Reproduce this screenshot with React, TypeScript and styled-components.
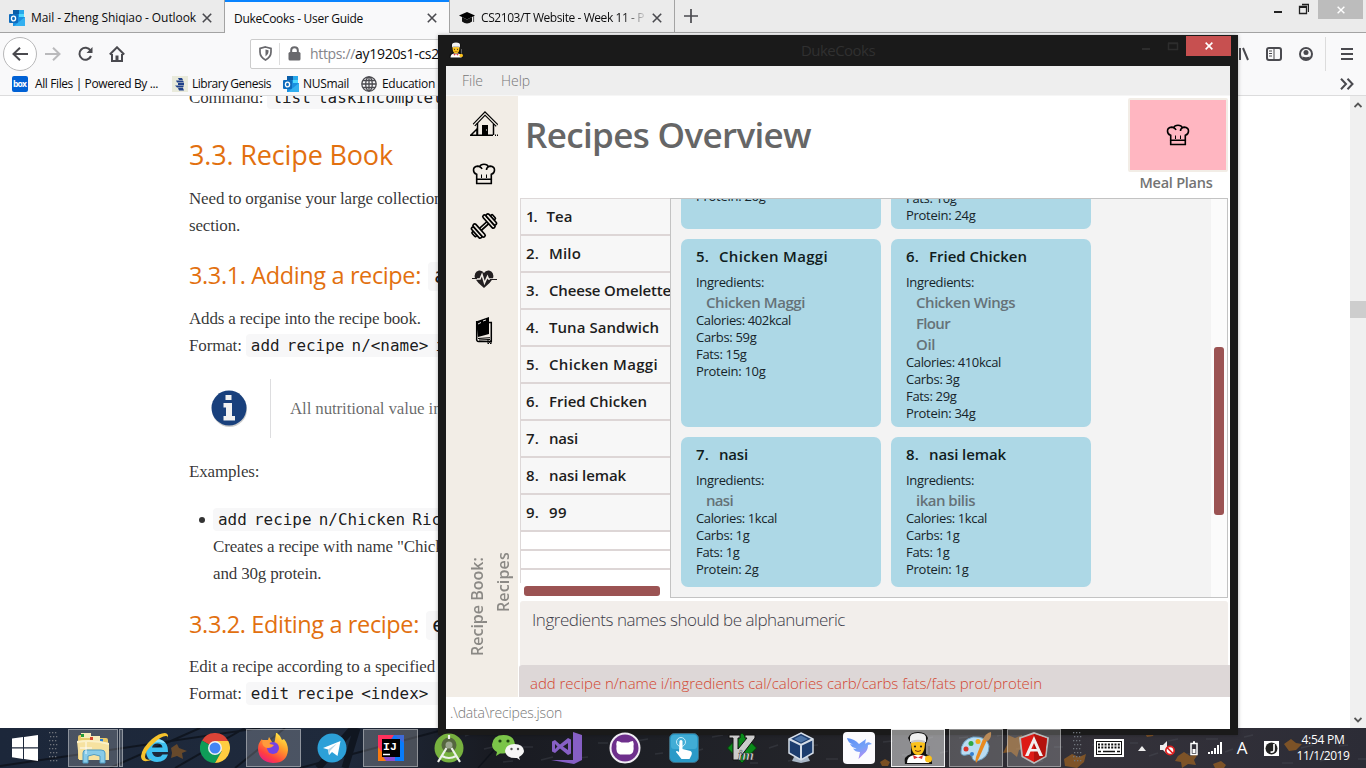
import React, { useLayoutEffect, useRef } from "react";
import styled, { createGlobalStyle, css } from "styled-components";

const UI = `"Open Sans", "Noto Sans", sans-serif`;

const GlobalStyle = createGlobalStyle`
  * { box-sizing: border-box; }
  body { margin: 0; overflow: hidden; background: #fff; font-family: ${UI}; }
  svg { display: block; flex: none; }
`;

/* ---------- text that keeps a known advance width ---------- */

const FitSpan = styled.span`
  display: inline-block;
  white-space: pre;
  flex: none;
`;

function Fit({ w, children, vertical }: { w: number; children: string; vertical?: boolean }) {
  const ref = useRef<HTMLSpanElement>(null);
  useLayoutEffect(() => {
    const el = ref.current;
    if (!el) return;
    el.style.letterSpacing = "0px";
    const natural = vertical ? el.offsetHeight : el.getBoundingClientRect().width;
    el.style.letterSpacing = `${(w - natural) / children.length}px`;
  }, [w, children, vertical]);
  return <FitSpan ref={ref}>{children}</FitSpan>;
}

/* ---------- desktop ---------- */

const Desktop = styled.div`
  position: relative;
  width: 1366px;
  height: 768px;
  overflow: hidden;
  display: grid;
  grid-template-rows: 728px 40px;
`;

/* ---------- browser ---------- */

const Browser = styled.div`
  display: flex;
  flex-direction: column;
  background: #fff;
  overflow: hidden;
`;

const TabStrip = styled.div`
  display: flex;
  height: 33px;
  flex: none;
  background: #ebebeb;
  border-bottom: 1px solid #a3a3a3;
`;

const Tab = styled.div<{ $active?: boolean }>`
  display: flex;
  align-items: center;
  width: 225px;
  height: ${(p) => (p.$active ? 33 : 32)}px;
  padding: 3px 12px 0 9px;
  border-right: 1px solid #a3a3a3;
  font-size: 12px;
  color: #0c0c0d;
  background: ${(p) => (p.$active ? "#f9f9fa" : "#ebebeb")};
  ${(p) => p.$active && css`box-shadow: inset 0 2px 0 #0a84ff;`}
`;

const TabTitle = styled.span<{ $gap?: number }>`
  margin-left: ${(p) => p.$gap ?? 6}px;
  flex: 1;
  overflow: hidden;
  white-space: pre;
`;

const FadeTitle = styled(TabTitle)`
  margin-right: 6px;
  mask-image: linear-gradient(90deg, #000 142px, transparent 167px);
`;

const NewTab = styled.div`
  display: flex;
  padding: 9px 9px;
`;

const WindowButtons = styled.div`
  display: flex;
  margin-left: auto;
  align-items: flex-start;
  padding-right: 3px;
`;

const CloseGray = styled.div`
  display: grid;
  place-items: center;
  width: 45px;
  height: 19px;
  margin-left: 9px;
  background: #bcbcbc;
`;

const NavBar = styled.div`
  display: flex;
  align-items: center;
  height: 39px;
  flex: none;
  padding: 2px 13px 0 3px;
  background: #f9f9fa;
`;

const BackButton = styled.div`
  display: grid;
  place-items: center;
  width: 34px;
  height: 34px;
  border: 1px solid #b8b8b9;
  border-radius: 50%;
  background: #fff;
  margin-right: 8px;
`;

const NavIcon = styled.div<{ $w: number }>`
  display: flex;
  width: ${(p) => p.$w}px;
`;

const UrlBar = styled.div`
  display: flex;
  align-items: center;
  width: 957px;
  height: 30px;
  margin-left: 117px;
  padding-left: 8px;
  border: 1px solid #ccc;
  border-radius: 2px;
  background: #fff;
  font-size: 14px;
  color: #0c0c0d;
`;

const UrlDivider = styled.div`
  width: 1px;
  height: 22px;
  margin: 0 8px 0 7px;
  background: #ddd;
`;

const Scheme = styled.span`
  margin-left: 9px;
  color: #85858a;
`;

const NavRight = styled.div`
  display: flex;
  align-items: center;
  margin-left: auto;
`;

const NavGap = styled.div`
  width: 17px;
`;

const MenuDivider = styled.div`
  width: 1px;
  height: 34px;
  margin: 0 15px 0 12px;
  background: #dcdcdc;
`;

const Bookmarks = styled.div`
  display: flex;
  align-items: center;
  height: 24px;
  flex: none;
  padding: 0 12px;
  background: #f9f9fa;
  border-bottom: 1px solid #dcdcdd;
  font-size: 12px;
  color: #0c0c0d;
`;

const Bookmark = styled.div<{ $gap: number; $inner: number }>`
  display: flex;
  align-items: center;
  gap: ${(p) => p.$inner}px;
  margin-right: ${(p) => p.$gap}px;
`;

const Overflow = styled.div`
  margin-left: auto;
`;

const PageArea = styled.div`
  display: flex;
  flex: 1;
  min-height: 0;
`;

const Article = styled.div`
  flex: 1;
  min-width: 0;
  overflow: hidden;
  padding-left: 189px;
  font-family: "Liberation Serif", serif;
  font-size: 17px;
  letter-spacing: -0.16px;
  line-height: 27px;
  color: rgba(0, 0, 0, 0.8);
  white-space: pre;
`;

const Para = styled.div<{ $top: number; $indent?: number }>`
  margin-top: ${(p) => p.$top}px;
  padding-left: ${(p) => p.$indent ?? 0}px;
`;

const Line = styled.div`
  display: flex;
  height: 27px;
  align-items: center;
`;

const Heading = styled.div<{ $top: number; $size: number; $h: number }>`
  display: flex;
  align-items: center;
  height: ${(p) => p.$h}px;
  margin-top: ${(p) => p.$top}px;
  font-family: ${UI};
  font-size: ${(p) => p.$size}px;
  line-height: 1;
  color: #e2700f;
`;

const Code = styled.code<{ $big?: boolean }>`
  display: inline-block;
  height: ${(p) => (p.$big ? 29 : 23)}px;
  line-height: ${(p) => (p.$big ? 28 : 24)}px;
  margin-left: ${(p) => (p.$big ? 7 : 0)}px;
  padding: 0 ${(p) => (p.$big ? 6 : 5)}px;
  border-radius: 4px;
  background: #f7f7f8;
  font-family: "DejaVu Sans Mono", monospace;
  font-size: ${(p) => (p.$big ? 22 : 15.94)}px;
  letter-spacing: 0;
  word-spacing: -0.15em;
  color: rgba(0, 0, 0, 0.9);
`;

const Note = styled.div`
  display: flex;
  align-items: center;
  height: 59px;
  margin-top: 20px;
  padding-left: 22px;
  color: rgba(0, 0, 0, 0.6);
`;

const NoteText = styled.div`
  display: flex;
  align-items: center;
  height: 59px;
  margin-left: 21px;
  padding-left: 19px;
  border-left: 1px solid #dddddf;
`;

const Bullet = styled.span`
  width: 6px;
  height: 6px;
  margin: 1px 8px 0 -14px;
  border-radius: 50%;
  background: #333;
`;

const PageScroll = styled.div`
  display: flex;
  flex-direction: column;
  align-items: center;
  justify-content: space-between;
  width: 16px;
  padding: 6px 0 5px;
  background: #f0f0f0;
`;

const PageThumb = styled.div`
  width: 16px;
  height: 17px;
  margin: 0 0 206px;
  background: #cdcdcd;
`;

/* ---------- DukeCooks window ---------- */

const AppWindow = styled.div`
  position: absolute;
  left: 438px;
  top: 35px;
  width: 800px;
  height: 700px;
  display: flex;
  flex-direction: column;
  padding: 0 8px 8px;
  background: #1a1a1a;
  box-shadow: 0 0 4px rgba(0, 0, 0, 0.3);
`;

const TitleBar = styled.div`
  display: grid;
  grid-template-columns: 1fr auto 1fr;
  height: 31px;
  flex: none;
  font-size: 15px;
  line-height: 31px;
  color: #303030;
`;

const TitleIcon = styled.div`
  padding: 7px 0 0 2px;
`;

const TitleButtons = styled.div`
  display: flex;
  justify-content: flex-end;
  align-items: flex-start;
`;

const CloseRed = styled.div`
  display: grid;
  place-items: center;
  width: 45px;
  height: 20px;
  margin: 1px -1px 0 4px;
  background: #c75050;
`;

const MenuBar = styled.div`
  display: flex;
  gap: 18px;
  height: 30px;
  flex: none;
  padding-left: 16px;
  background: #eeeeee;
  border-bottom: 1px solid #f6f6f6;
  font-size: 14px;
  font-weight: 300;
  line-height: 29px;
  color: #777;
`;

const Body = styled.div`
  display: flex;
  height: 601px;
  flex: none;
  background: #fff;
`;

const Sidebar = styled.div`
  display: flex;
  flex-direction: column;
  width: 72px;
  padding: 15px 0 41px 24px;
  background: #f2ede6;
`;

const SideIcon = styled.div<{ $gap?: number }>`
  width: 28px;
  height: 28px;
  margin-bottom: ${(p) => p.$gap ?? 24}px;
`;

const SideLabel = styled.div`
  display: flex;
  flex-direction: column;
  margin: auto 0 0 -6px;
  writing-mode: vertical-rl;
  transform: rotate(180deg);
  width: 52px;
  height: 104px;
  font-size: 16px;
  font-weight: 600;
  line-height: 26px;
  color: #8b8985;
  align-self: flex-start;
`;

const SecondLine = styled.div`
  padding-top: 44px;
`;

const Main = styled.div`
  display: flex;
  flex-direction: column;
  flex: 1;
  padding-left: 1px;
`;

const Header = styled.div`
  display: flex;
  justify-content: space-between;
  height: 102px;
  flex: none;
  padding: 2px 2px 0 6px;
`;

const PageTitle = styled.div`
  margin-top: 17px;
  font-size: 35px;
  font-weight: 600;
  line-height: 40px;
  color: #666;
`;

const PlanTile = styled.div`
  display: flex;
  flex-direction: column;
  align-items: center;
  width: 100px;
  font-size: 14.5px;
  font-weight: 600;
  line-height: 21px;
  color: #737373;
`;

const PlanCaption = styled.div`
  padding-right: 4px;
`;

const PlanButton = styled.div`
  display: grid;
  place-items: center;
  width: 100px;
  height: 74px;
  flex: none;
  border: 2px solid #f2ede6;
  border-radius: 2px;
  background: #ffb6c1;
`;

const Split = styled.div`
  display: flex;
  height: 400px;
  flex: none;
  padding: 0 2px 0 1px;
`;

const List = styled.div`
  width: 150px;
  overflow: hidden;
  border-top: 1px solid #ddd8d8;
`;

const ListViewport = styled.div`
  height: 384px;
  overflow: hidden;
`;

const ListRow = styled.div<{ $empty?: boolean }>`
  display: flex;
  gap: 10px;
  height: ${(p) => (p.$empty ? 19 : 37)}px;
  padding-left: 5px;
  border-left: 1px solid #ddd8d8;
  border-bottom: 2px solid #ddd6d6;
  background: ${(p) => (p.$empty ? "#fff" : "#f7f7f7")};
  font-size: 15px;
  font-weight: 600;
  line-height: 35px;
  color: #1d1d1d;
`;

const HThumb = styled.div`
  width: 136px;
  height: 10px;
  margin: 3px 0 0 4px;
  border-radius: 3px;
  background: #9b5353;
`;

const CardsPane = styled.div`
  display: flex;
  flex: 1;
  border: 1px solid #c3c3c3;
  background: #f3f3f3;
`;

const CardsGrid = styled.div`
  display: grid;
  grid-template-columns: 200px 200px;
  grid-template-rows: 30px 188px 150px;
  gap: 10px;
  flex: 1;
  padding-left: 10px;
  overflow: hidden;
`;

const Card = styled.div<{ $cut?: number }>`
  display: flex;
  flex-direction: column;
  justify-content: ${(p) => (p.$cut ? "flex-end" : "flex-start")};
  padding: ${(p) => (p.$cut ? `0 15px ${p.$cut}px` : "6px 15px 0")};
  border-radius: ${(p) => (p.$cut ? "0 0 7px 7px" : "7px")};
  background: #add8e6;
  overflow: hidden;
  font-size: 13px;
  line-height: 17px;
  color: #16242a;
`;

const CardTitle = styled.div`
  display: flex;
  gap: 10px;
  height: 28.5px;
  flex: none;
  font-size: 15px;
  font-weight: 600;
  line-height: 23px;
  color: #101c20;
`;

const CardLine = styled.div`
  height: 17px;
  flex: none;
`;

const Ingredient = styled.div`
  height: 21px;
  flex: none;
  padding-left: 10px;
  font-size: 15px;
  font-weight: 600;
  line-height: 22px;
  color: #657278;
`;

const CardsScroll = styled.div`
  width: 16px;
  padding: 148px 0 0 3px;
  background: #fbfbfb;
`;

const VThumb = styled.div`
  width: 10px;
  height: 168px;
  border-radius: 3px;
  background: #9b5353;
`;

const Result = styled.div`
  height: 64px;
  flex: none;
  margin: 3px 2px 0 1px;
  padding-left: 12px;
  border-radius: 3px 3px 0 0;
  background: #f2eeeb;
  font-size: 17px;
  font-weight: 300;
  line-height: 38px;
  color: #3c3c48;
`;

const Command = styled.div`
  height: 32px;
  flex: none;
  padding-left: 11px;
  border-radius: 3px 0 0 0;
  background: #ddd7d7;
  font-size: 15px;
  font-weight: 300;
  line-height: 37px;
  color: #d2452f;
`;

const Status = styled.div`
  flex: 1;
  padding-left: 4px;
  background: #fff;
  font-size: 14px;
  font-weight: 300;
  line-height: 32px;
  color: #777;
`;

/* ---------- taskbar ---------- */

const Wallpaper = styled.div`
  height: 40px;
  background: linear-gradient(90deg, #1c273a 0, #1f2a3c 25%, #191b22 36%, #1f2127 50%, #26262b 65%, #34323a 80%, #2c2c36 100%);
`;

const Taskbar = styled.div`
  position: absolute;
  left: 0;
  bottom: 0;
  display: flex;
  align-items: center;
  width: 1366px;
  height: 40px;
`;

const Slot = styled.div<{ $w: number; $open?: boolean; $front?: boolean }>`
  display: grid;
  place-items: center;
  width: ${(p) => p.$w}px;
  height: 38px;
  ${(p) =>
    p.$open &&
    css`
      width: ${p.$w - 4}px;
      margin: 0 2px;
      background: ${p.$front ? "rgba(255,255,255,.48)" : "rgba(255,255,255,.2)"};
      border: 1px solid ${p.$front ? "rgba(255,255,255,.85)" : "rgba(255,255,255,.38)"};
    `}
`;

const Sliver = styled.div`
  width: 4px;
  height: 38px;
  margin: 0 4px 0 -1px;
  border: 1px solid rgba(255, 255, 255, 0.38);
  background: rgba(255, 255, 255, 0.2);
`;

const Clock = styled.div`
  display: flex;
  flex-direction: column;
  align-items: center;
  width: 86px;
  margin-left: auto;
  font-size: 12px;
  line-height: 16px;
  color: #fff;
`;

const TrayIcon = styled.div<{ $left: number }>`
  margin-left: ${(p) => p.$left}px;
  color: #fff;
  font-size: 17px;
  line-height: 20px;
`;

/* ---------- icons ---------- */

const OutlookIcon = () => (
  <svg width="16" height="16" viewBox="0 0 16 16">
    <path d="M4 0h11v8H4z" fill="#1490df" />
    <path d="M4 0h6v4H4z" fill="#0a5ea8" />
    <path d="M10 0h5v4h-5z" fill="#28a8ea" />
    <path d="M10 4h5v4h-5z" fill="#50d9ff" />
    <path d="M4 7h12v9H4z" fill="#1a8fe0" />
    <path d="M16 7v9H5z" fill="#33b0f0" />
    <rect y="4" width="9" height="9" rx="1" fill="#0f6cbd" />
    <ellipse cx="4.5" cy="8.5" rx="2.1" ry="2.4" fill="none" stroke="#fff" strokeWidth="1.3" />
  </svg>
);

const Cross = ({ s = 10, c = "#4a4a4f", w = 1.6 }) => (
  <svg width={s} height={s} viewBox="0 0 10 10">
    <path d="M.8.8l8.4 8.4M9.2.8L.8 9.2" stroke={c} strokeWidth={w} />
  </svg>
);

const CapIcon = () => (
  <svg width="16" height="14" viewBox="0 0 16 14">
    <path d="M8 1l8 3.6-8 3.8L0 4.600z" fill="#000" />
    <path d="M3 6v4.500Q8 14.500 13 10.500V6L8 8.400z" fill="#111" />
    <path d="M14.600 5v6" stroke="#555" />
  </svg>
);

const GlobeIcon = () => (
  <svg width="16" height="16" viewBox="0 0 16 16" fill="none" stroke="#4a4a4f" strokeWidth="1.3">
    <circle cx="8" cy="8" r="7.200" />
    <ellipse cx="8" cy="8" rx="3.300" ry="7.200" />
    <path d="M8 1v14M1 8h14M2 4.500h12M2 11.500h12" />
  </svg>
);

const ChefHat = () => (
  <svg width="28" height="28" viewBox="0 0 28 28">
    <g fill="none" stroke="#000" strokeWidth="1.6">
      <path d="M6.700 19.500v-5.200Q3.500 13.500 3.500 10q0-3.500 4.200-3.900 1.300.1 2 .6Q10.500 4.300 14 4.300t4.300 2.400q.8-.5 2-.6Q24.500 6.500 24.500 10q0 3.500-3.200 4.300v5.200M9.500 7Q11.500 7.300 12 9M18.500 7Q16.500 7.300 16.500 10" />
      <path d="M6 19.300h16M6 23.500h16M6.700 19v5M21.300 19v5" />
    </g>
    <path d="M11.500 14.500v3.500M16.500 14.500v3.500" stroke="#000" />
  </svg>
);

const HouseIcon = () => (
  <svg width="28" height="28" viewBox="0 0 28 28">
    <path d="M4 14L15 2.500l12 12" fill="none" stroke="#000" strokeWidth="3.500" />
    <path d="M4 14L15 2.500l12 12" fill="none" stroke="#f2ede6" strokeWidth="1.200" />
    <path d="M7.500 12v12M23.500 13v11" stroke="#000" strokeWidth="1.500" />
    <path d="M12 14h6v10h-6z" fill="#000" />
    <path d="M0 24.300h23M1 24l6-6v6M25 24.300h1M27 24.300h1" fill="none" stroke="#000" strokeWidth="1.500" />
    <path d="M16 19h1" stroke="#fff" />
  </svg>
);

const DumbbellIcon = () => (
  <svg width="28" height="28" viewBox="0 0 28 28">
    <g transform="translate(14 14) rotate(-42) scale(.92) translate(-14 -14)" fill="#f2ede6" stroke="#000" strokeWidth="1.800">
      <rect x="8" y="12.600" width="12" height="3" />
      <rect x="-1" y="10.500" width="3" height="6" rx="1" />
      <rect x="26" y="10.500" width="3" height="6" rx="1" />
      <rect x="1.500" y="6.500" width="3.600" height="15" rx="1.800" />
      <rect x="5" y="5" width="3.600" height="18" rx="1.800" />
      <rect x="19.400" y="5" width="3.600" height="18" rx="1.800" />
      <rect x="22.900" y="6.500" width="3.600" height="15" rx="1.800" />
    </g>
  </svg>
);

const HeartIcon = () => (
  <svg width="28" height="28" viewBox="0 0 28 28">
    <path d="M14 24Q8 19.500 5 14.500 3.500 8 9 6.500q3.500-.3 5 2.500 1.500-2.800 5-2.500 5.500 1.500 4 8Q20 19.500 14 24z" fill="#231f20" />
    <path d="M2 15h8l2-4.500 2.500 8.500 3-6.500 1 2.500H27" fill="none" stroke="#f2ede6" strokeWidth="1.500" />
    <path d="M2 14.500h5M20 15.500h7" stroke="#231f20" strokeWidth="1.200" />
  </svg>
);

const BookIcon = () => (
  <svg width="28" height="28" viewBox="0 0 28 28">
    <path d="M6 5.500L19 1v17L8 21z" fill="#000" />
    <path d="M6.700 5v17q-.5 3.500 2 3.500h12.600V6.500H18" fill="none" stroke="#000" strokeWidth="1.500" />
    <path d="M8 22.500l12-.8M9 24l11-.5M18 23v5l1.500-1.500L21 28v-4" fill="none" stroke="#000" />
    <path d="M8 8l3-1.500M13 5l3-1" stroke="#fff" strokeWidth=".9" />
  </svg>
);

const ChefIcon = ({ s }: { s: number }) => (
  <svg width={s} height={s} viewBox="0 0 32 32">
    <path d="M3 32q-2-8 6-10V12L6 6q2-6 10-6t10 6l-2 6v10q7 2 6 10z" fill="#111" />
    <path d="M5 31q0-7 7-8h8q7 1 7 8z" fill="#fff" />
    <path d="M9 10q0 13 7 13t7-13z" fill="#fcc21b" />
    <path d="M8 10V7Q7 1 16 1t8 6v3q-8-2-16 0z" fill="#f1f1f1" />
    <path d="M9 9q7-2.500 14 0v2q-7-2-14 0z" fill="#c9c9c9" />
    <circle cx="13" cy="14.500" r="1.100" fill="#222" />
    <circle cx="19" cy="14.500" r="1.100" fill="#222" />
    <path d="M13 18.500q3 2 6 0" stroke="#7a3b10" fill="none" />
    <path d="M11 23l5 2.500L21 23l-1 4-4-1.500-4 1.500z" fill="#dd2c34" />
    <path d="M27 14v9" stroke="#777" strokeWidth="1.500" />
    <circle cx="26.500" cy="27" r="3.500" fill="#fcc21b" />
  </svg>
);

const Grip = () => (
  <svg width="9" height="32" viewBox="0 0 9 32">
    {Array.from({ length: 8 }, (_, r) =>
      [0, 3, 6].map((c) => <rect key={`${r}-${c}`} x={c + (r % 2)} y={r * 4} width="1.300" height="1.300" fill="#6f737b" />)
    )}
  </svg>
);

const Wall = () => (
  <svg width="1366" height="40" viewBox="0 0 1366 40">
    <g stroke="#0c1018" fill="none" opacity=".75">
      <path d="M0 38L260 0M110 40L200 0M175 40l70-40M235 40l50-40M300 40L450 0" strokeWidth="2" />
      <path d="M318 40l35-40M345 40l12-40" strokeWidth="7" />
      <path d="M478 40l32-36" strokeWidth="1.500" />
    </g>
    <g stroke="#555962" opacity=".3" strokeWidth="1.500">
      {Array.from({ length: 48 }, (_, i) => (
        <path key={i} d={`M${465 + i * 19} ${8 + ((i * 13) % 28)}l${8 + (i % 5)} ${-3 + (i % 4)}`} />
      ))}
    </g>
    <g fill="#b06a1c">
      <path d="M171 20l6-4 2 4 8 3-5 2 1 6-6-3-6 2 1-5z" opacity=".5" />
      <path d="M1008 7l7 3 7-3-1 8 6 5-8 2-2 7-6-5-8 1 4-8zM1064 31l8-5 7 3 7-3-2 8-7 6-12-2zM1178 28l6-4 6 4 8-2-4 6 2 5-8-1-6 4-1-6-6-1zM1284 16l7-5 5 4 6 1-6 6-7 1zM1213 36l8-3 5 4-2 3h-9zM880 34l5-3 5 3-2 4h-6zM1143 2l6 3 6-2-2 5-6 1z" opacity=".6" />
    </g>
  </svg>
);

const WindowsLogo = () => (
  <svg width="26" height="26" viewBox="0 0 26 26" fill="#fff">
    <path d="M0 3.600L11 2v10.300H0zM12 1.900L26 0v12.300H12zM0 13.500h11V24L0 22.300zM12 13.500h14V26l-14-1.900z" />
  </svg>
);

const ExplorerIcon = () => (
  <svg width="34" height="32" viewBox="0 0 34 32">
    <path d="M2 5q0-2 2-2h8l2 3h16q2 0 2 2v19H2z" fill="#e8c868" />
    <rect x="5" y="1" width="10" height="5" fill="#f7ebb8" /><rect x="14" y="4" width="10" height="5" fill="#f7ebb8" />
    <path d="M5 2h3v3H5z" fill="#249b35" /><path d="M14 5h3v3h-3z" fill="#d4452d" /><path d="M24 7h3v3h-3z" fill="#2a7fd4" />
    <path d="M1 9q15-3 32 2v17H3z" fill="#f6e2a0" />
    <path d="M1 9q15-3 32 2v2Q17 8 1 11z" fill="#fbf1c8" />
    <path d="M7 31V21q0-3 3-3h15q4 0 4 3v10h-5v-7q-6-3-12 0v7z" fill="#88cbe8" stroke="#4f9cc4" />
    <path d="M10 10v12M4 16h12" stroke="#fff" strokeWidth="1" opacity=".9" />
  </svg>
);

const IEIcon = () => (
  <svg width="32" height="32" viewBox="0 0 32 32">
    <path d="M28 20H12q1 5 6 5 3 0 4.500-2.500H28Q25.500 30 17 30 6 29.500 6 18.500 6.500 7.500 17 7q11 .5 11 13zM12 15.500h10.500Q22 11.500 17.500 11.500T12 15.500z" fill="#3fc0f0" />
    <path d="M6 18q1-10 11-11 5 0 8 4-3 0-6-1-9 0-13 8z" fill="#90e2fb" />
    <path d="M27 8q3-6-2-7-6 0-13 6Q2 16 1 24q0 6 6 5 3 0 5-2-6 2-7-2 0-6 8-13 8-8 13-8 3 0 1 4z" fill="#f7c32c" />
  </svg>
);

const ChromeIcon = () => (
  <svg width="30" height="30" viewBox="0 0 30 30">
    <path d="M15 15L2 7.500A15 15 0 0 1 28 7.500z" fill="#db4437" />
    <path d="M15 15L2 7.500A15 15 0 0 0 15 30l6.500-11z" fill="#0f9d58" />
    <path d="M15 8h13.300A15 15 0 0 1 15 30l6.500-11.500z" fill="#ffcd40" />
    <circle cx="15" cy="15" r="7" fill="#f1f1f1" /><circle cx="15" cy="15" r="5.500" fill="#4285f4" />
  </svg>
);

const FirefoxIcon = () => (
  <svg width="32" height="32" viewBox="0 0 32 32">
    <defs>
      <linearGradient id="fx" x1=".8" y1="0" x2=".2" y2="1">
        <stop offset="0" stopColor="#fff04a" /><stop offset=".4" stopColor="#ff9a2a" /><stop offset=".75" stopColor="#ff4040" /><stop offset="1" stopColor="#e8188a" />
      </linearGradient>
    </defs>
    <path d="M20 1q4 3 5 7l2-1q4 5 4 11Q30 31 16 31 2 30 1 17q0-6 4-10l1 4q2-3 5-3l1-3 3 5 2 2 1-4 1-7z" fill="url(#fx)" />
    <circle cx="16" cy="16" r="6" fill="#7542e5" />
    <path d="M5 8q0 8 6 8 4 0 6-3l-4-1-2-4-4 0z" fill="#ff9a3c" />
  </svg>
);

const TelegramIcon = () => (
  <svg width="30" height="30" viewBox="0 0 30 30">
    <circle cx="15" cy="15" r="14.500" fill="#2ca0d8" />
    <path d="M6 15L23.500 8l-3 15-5.500-4-3 3-1-5.500z" fill="#fff" /><path d="M11 16.500l9-6-7 7.500-1 4z" fill="#b6d4e6" />
  </svg>
);

const IJIcon = () => (
  <svg width="26" height="26" viewBox="0 0 26 26">
    <path d="M0 0h26v26H0z" fill="#087cfa" /><path d="M0 0h16L4 18H0z" fill="#fe315d" /><path d="M0 12l5 6 4 8H0z" fill="#f97a12" /><path d="M16 0h10v8z" fill="#3f6ad8" /><path d="M4 20h13v6H8z" fill="#8a4fd0" />
    <path d="M4 4h18v18H4z" fill="#000" />
    <path d="M5 19.500h7" stroke="#fff" strokeWidth="1.500" />
    <text x="5" y="15" fill="#fff" fontFamily="Liberation Mono, monospace" fontWeight="700" fontSize="11.500">IJ</text>
  </svg>
);

const StudioIcon = () => (
  <svg width="30" height="30" viewBox="0 0 30 30">
    <circle cx="15" cy="15" r="14.500" fill="#77b13f" /><circle cx="15" cy="12" r="7.500" fill="#55663f" /><circle cx="15" cy="12" r="3.500" fill="#9aa58f" />
    <path d="M15 6V2M12.500 15L4 29M17.500 15L26 29M8 23q7 4 14 0" stroke="#eef2ea" strokeWidth="2.200" fill="none" />
  </svg>
);

const WeChatIcon = () => (
  <svg width="32" height="28" viewBox="0 0 32 28">
    <path d="M4 22l1-4Q0 15 0 10.500 1 1 11.500 1T23 10.500Q22 19 11 19.500l-3 0z" fill="#7bc549" />
    <circle cx="8" cy="7" r="1.600" fill="#1d4410" /><circle cx="16" cy="7" r="1.600" fill="#1d4410" />
    <path d="M28 26l-1-3q5-3 5-6-1-7-9.500-7T13 17q1 7.500 12 7z" fill="#f6f6f6" />
    <circle cx="19.500" cy="15" r="1.200" fill="#555" /><circle cx="26" cy="15" r="1.200" fill="#555" />
  </svg>
);

const VSIcon = () => (
  <svg width="32" height="32" viewBox="0 0 32 32">
    <path d="M23 0l9 3v25l-8 4L1 28h22z" fill="#865fc5" /><path d="M2 9.500l3-1.500 5 4.500L18 6l3 1.500v14L18 23l-8-6.500L5 21l-3-1.500zM5 12v5l2.500-2.500zm13-1l-5 3.500 5 3.500z" fill="#865fc5" fillRule="evenodd" />
  </svg>
);

const GithubIcon = () => (
  <svg width="32" height="32" viewBox="0 0 32 32">
    <circle cx="16" cy="16" r="15.500" fill="#f2eef5" /><circle cx="16" cy="16" r="13.500" fill="#6e2f8c" />
    <path d="M8 9q2.500 0 4.500 1.500h7Q21.500 9 24 9q1 2.500.5 5 1 7-3.500 8.500H11Q6.500 21 7.500 14 7 11.500 8 9z" fill="#fff" />
  </svg>
);

const TouchIcon = () => (
  <svg width="30" height="30" viewBox="0 0 30 30">
    <rect x=".5" y=".5" width="29" height="29" rx="5" fill="#2b9ac8" stroke="#3d6c80" /><rect x="2" y="2" width="26" height="14" rx="3" fill="#58bfe4" opacity=".5" />
    <circle cx="12" cy="9" r="4.500" fill="none" stroke="#c9edfa" />
    <path d="M10.500 8q1.500-2 3 0v8l8 2q2 1 1 4l-2 4h-8L7 19q0-2 3 0z" fill="#fff" />
  </svg>
);

const VimIcon = () => (
  <svg width="32" height="32" viewBox="0 0 32 32">
    <path d="M16 1l14.500 15L16 31 1.500 16z" fill="#0a8a1a" stroke="#053d0a" />
    <path d="M3 3h11v3h-2v11L21 6h-2V3h10v3L12 28H7V6H3z" fill="#ccc" stroke="#111" />
    <text x="12" y="28" fill="#e0e0e0" stroke="#222" strokeWidth=".5" fontFamily="Liberation Serif, serif" fontStyle="italic" fontWeight="700" fontSize="15">im</text>
  </svg>
);

const VBoxIcon = () => (
  <svg width="28" height="32" viewBox="0 0 28 32">
    <path d="M7 25h14l2 4-9 2-9-2z" fill="#aab8c8" />
    <path d="M14 1l12 6v14l-12 7-12-7V7z" fill="#1c3d6e" stroke="#d4dde8" strokeWidth="1.500" />
    <path d="M2 7l12 6 12-6M14 13v15" fill="none" stroke="#d4dde8" strokeWidth="2" /><path d="M7 7l7-3.500L21 7l-7 3.500z" fill="#4d75a8" />
  </svg>
);

const BirdIcon = () => (
  <svg width="32" height="32" viewBox="0 0 32 32">
    <defs><linearGradient id="bd" x1="0" y1="0" x2=".5" y2="1"><stop offset="0" stopColor="#5b8ff5" /><stop offset=".6" stopColor="#75a2f8" /><stop offset="1" stopColor="#b08cf4" /></linearGradient></defs>
    <rect width="32" height="32" rx="4" fill="#fbfbfe" />
    <path d="M4 6q8 1 12 6l7-5q-1 3-.500 5 1.500-2.500 4-1.500l2.500 1.500-4 1q0 6-4.500 9-2 2-5 5l1.500-7q-5 0-7-3.500 2 .5 3.500 0-5-1-6.500-4.500l3 .5Q5 11 4 6z" fill="url(#bd)" />
  </svg>
);

const PaintIcon = () => (
  <svg width="34" height="32" viewBox="0 0 34 32">
    <path d="M2 20Q2 8 14 5q14-1 16 9 0 12-12 15-5 0-5-5-2-3-6-1-5 1-5-3z" fill="#b9dcf2" stroke="#6ea4c8" />
    <circle cx="7" cy="17" r="2.500" fill="#d8342a" /><circle cx="12" cy="11.500" r="2.500" fill="#2fa843" /><circle cx="19" cy="9.500" r="2.500" fill="#f2ab1c" /><circle cx="13" cy="22" r="2" fill="#357fd0" />
    <path d="M28 8l-8 18q-2 4-3 5-1-3 0-6l7-18z" fill="#e88a20" /><path d="M24 7q3-6 8-7 1 5-3 9z" fill="#b98a58" />
  </svg>
);

const AngularIcon = () => (
  <svg width="32" height="32" viewBox="0 0 32 32">
    <path d="M16 0l15 5.500-2.500 19.500L16 32 3.500 25 1 5.500z" fill="#b9b9b9" /><path d="M16 2l13 4.500-2 17.500-11 6-11-6L3 6.500z" fill="#dd1b16" /><path d="M16 2l13 4.500-2 17.500-11 6z" fill="#b3120d" />
    <path d="M16 4l9 20h-3.500l-2-4.500h-7l-2 4.500H7zm0 7l-2.700 6h5.400z" fill="#f0f0f0" fillRule="evenodd" />
  </svg>
);

const KeyboardIcon = () => (
  <svg width="30" height="18" viewBox="0 0 30 18">
    <rect width="30" height="18" fill="#fff" /><rect x="2.500" y="2.500" width="25" height="13" fill="none" stroke="#111" />
    <path d="M4 5.500h22M4 8.500h22" stroke="#111" strokeWidth="2" strokeDasharray="2 1.300" /><path d="M4 12.500h3M9 12.500h12M23 12.500h3" stroke="#111" strokeWidth="1.500" />
  </svg>
);

const SpeakerIcon = () => (
  <svg width="16" height="16" viewBox="0 0 16 16">
    <path d="M1 5h3l4-4v13l-4-4H1z" fill="#eee" /><circle cx="11" cy="10.500" r="4.200" fill="#fff" stroke="#e02020" strokeWidth="1.700" /><path d="M8 7.500l6 6" stroke="#e02020" strokeWidth="1.700" />
  </svg>
);

/* ---------- data ---------- */

const recipes: [string, string, number][] = [
  ["1.", "Tea", 26],
  ["2.", "Milo", 32],
  ["3.", "Cheese Omelette", 122],
  ["4.", "Tuna Sandwich", 110],
  ["5.", "Chicken Maggi", 109],
  ["6.", "Fried Chicken", 98],
  ["7.", "nasi", 29],
  ["8.", "nasi lemak", 77],
  ["9.", "99", 18],
];

type CardData = { no: string; name: [string, number]; ingredients: [string, number][]; facts: [string, number][] };

const cards: CardData[] = [
  { no: "5.", name: ["Chicken Maggi", 109], ingredients: [["Chicken Maggi", 99]], facts: [["Calories: 402kcal", 95], ["Carbs: 59g", 60.5], ["Fats: 15g", 50.5], ["Protein: 10g", 69.5]] },
  { no: "6.", name: ["Fried Chicken", 98], ingredients: [["Chicken Wings", 99], ["Flour", 34], ["Oil", 19]], facts: [["Calories: 410kcal", 95], ["Carbs: 3g", 53.5], ["Fats: 29g", 50.5], ["Protein: 34g", 69.5]] },
  { no: "7.", name: ["nasi", 29], ingredients: [["nasi", 27]], facts: [["Calories: 1kcal", 81], ["Carbs: 1g", 53.5], ["Fats: 1g", 43.5], ["Protein: 2g", 62.5]] },
  { no: "8.", name: ["nasi lemak", 77], ingredients: [["ikan bilis", 59]], facts: [["Calories: 1kcal", 81], ["Carbs: 1g", 53.5], ["Fats: 1g", 43.5], ["Protein: 1g", 62.5]] },
];

function RecipeCard({ c }: { c: CardData }) {
  return (
    <Card>
      <CardTitle><Fit w={13}>{c.no}</Fit><Fit w={c.name[1]}>{c.name[0]}</Fit></CardTitle>
      <CardLine><Fit w={68}>Ingredients:</Fit></CardLine>
      {c.ingredients.map(([t, w]) => <Ingredient key={t}><Fit w={w}>{t}</Fit></Ingredient>)}
      {c.facts.map(([t, w]) => <CardLine key={t}><Fit w={w}>{t}</Fit></CardLine>)}
    </Card>
  );
}

function DukeCooks() {
  return (
    <AppWindow>
      <TitleBar>
        <TitleIcon><ChefIcon s={16} /></TitleIcon>
        <Fit w={74}>DukeCooks</Fit>
        <TitleButtons>
          <svg width="40" height="20" viewBox="0 0 40 20"><path d="M0 14h8" stroke="#2d2d2d" strokeWidth="2" /><path d="M26.500 8.500h9v6h-9zM26 8h10" fill="none" stroke="#2d2d2d" strokeWidth="1.500" /></svg>
          <CloseRed><Cross s={8} c="#fff" w={2} /></CloseRed>
        </TitleButtons>
      </TitleBar>
      <MenuBar><Fit w={21}>File</Fit><Fit w={29}>Help</Fit></MenuBar>
      <Body>
        <Sidebar>
          <SideIcon $gap={21}><HouseIcon /></SideIcon>
          <SideIcon><ChefHat /></SideIcon>
          <SideIcon><DumbbellIcon /></SideIcon>
          <SideIcon><HeartIcon /></SideIcon>
          <SideIcon><BookIcon /></SideIcon>
          <SideLabel>
            <div><Fit w={99} vertical>Recipe Book:</Fit></div>
            <SecondLine><Fit w={60} vertical>Recipes</Fit></SecondLine>
          </SideLabel>
        </Sidebar>
        <Main>
          <Header>
            <PageTitle><Fit w={286}>Recipes Overview</Fit></PageTitle>
            <PlanTile>
              <PlanButton><ChefHat /></PlanButton>
              <PlanCaption><Fit w={73}>Meal Plans</Fit></PlanCaption>
            </PlanTile>
          </Header>
          <Split>
            <List>
              <ListViewport>
                {recipes.map(([n, name, w]) => (
                  <ListRow key={n}><Fit w={n === "1." ? 10.5 : 13}>{n}</Fit><Fit w={w}>{name}</Fit></ListRow>
                ))}
                <ListRow $empty /><ListRow $empty /><ListRow $empty />
              </ListViewport>
              <HThumb />
            </List>
            <CardsPane>
              <CardsGrid>
                <Card $cut={24}><CardLine><Fit w={69.5}>Protein: 26g</Fit></CardLine></Card>
                <Card $cut={5}><CardLine><Fit w={50.5}>Fats: 10g</Fit></CardLine><CardLine><Fit w={69.5}>Protein: 24g</Fit></CardLine></Card>
                {cards.map((c) => <RecipeCard key={c.no} c={c} />)}
              </CardsGrid>
              <CardsScroll><VThumb /></CardsScroll>
            </CardsPane>
          </Split>
          <Result><Fit w={313}>Ingredients names should be alphanumeric</Fit></Result>
          <Command><Fit w={512}>add recipe n/name i/ingredients cal/calories carb/carbs fats/fats prot/protein</Fit></Command>
        </Main>
      </Body>
      <Status><Fit w={112}>{".\\data\\recipes.json"}</Fit></Status>
    </AppWindow>
  );
}

function BrowserWindow() {
  return (
    <Browser>
      <TabStrip>
        <Tab><OutlookIcon /><TabTitle><Fit w={165}>Mail - Zheng Shiqiao - Outlook</Fit></TabTitle><Cross /></Tab>
        <Tab $active><TabTitle $gap={0}><Fit w={129}>DukeCooks - User Guide</Fit></TabTitle><Cross /></Tab>
        <Tab><CapIcon /><FadeTitle><Fit w={163}>CS2103/T Website - Week 11 - P</Fit></FadeTitle><Cross /></Tab>
        <NewTab><svg width="14" height="14" viewBox="0 0 14 14"><path d="M7 0v14M0 7h14" stroke="#4a4a4f" strokeWidth="1.700" /></svg></NewTab>
        <WindowButtons>
          <svg width="36" height="16" viewBox="0 0 36 16"><path d="M1 12h8" stroke="#222" strokeWidth="2" /><path d="M26.500 6.500h7v7h-7zM29 4.500h6.500V12" fill="none" stroke="#222" strokeWidth="1.300" /><path d="M26 7h8" stroke="#222" strokeWidth="2" /></svg>
          <CloseGray><Cross s={8} c="#fff" w={1.800} /></CloseGray>
        </WindowButtons>
      </TabStrip>
      <NavBar>
        <BackButton><svg width="16" height="14" viewBox="0 0 16 14"><path d="M16 7H1.500M8 .8L1.500 7 8 13.200" fill="none" stroke="#4a4a4f" strokeWidth="2" /></svg></BackButton>
        <NavIcon $w={33}><svg width="16" height="14" viewBox="0 0 16 14"><path d="M0 7h14.500M8 .8L14.500 7 8 13.200" fill="none" stroke="#bababc" strokeWidth="2" /></svg></NavIcon>
        <NavIcon $w={31}><svg width="15" height="16" viewBox="0 0 15 16"><path d="M12.500 4.500A6 6 0 1 0 13 10" fill="none" stroke="#4a4a4f" strokeWidth="2" /><path d="M14.500 1v6H8.500z" fill="#4a4a4f" /></svg></NavIcon>
        <NavIcon $w={24}><svg width="16" height="16" viewBox="0 0 16 16" fill="none" stroke="#4a4a4f" strokeWidth="2"><path d="M.8 8.500L8 1.300l7.200 7.200M3 8v7h10V8" /><path d="M8 9.500V15" strokeWidth="3" /></svg></NavIcon>
        <UrlBar>
          <svg width="13" height="15" viewBox="0 0 13 15"><path d="M6.500 1L12 2.500V6q0 5-5.500 8Q1 11 1 6V2.500z" fill="none" stroke="#68686c" strokeWidth="1.700" /><path d="M6.500 3.500v7Q9.500 8.500 9.500 6V4.300z" fill="#68686c" /></svg>
          <UrlDivider />
          <svg width="13" height="15" viewBox="0 0 13 15"><rect x=".5" y="6" width="12" height="8.500" rx="1.500" fill="#68686c" /><path d="M3.200 7V4.200q0-3 3.300-3t3.300 3V7" fill="none" stroke="#68686c" strokeWidth="2" /></svg>
          <Scheme><Fit w={45}>https://</Fit></Scheme><Fit w={84}>ay1920s1-cs2</Fit>
        </UrlBar>
        <NavRight>
          <svg width="16" height="16" viewBox="0 0 16 16" stroke="#4a4a4f" strokeWidth="2" fill="none"><path d="M3 2v12M7 2v12M10 2l5 12" /></svg>
          <NavGap />
          <svg width="16" height="14" viewBox="0 0 16 14"><rect x="1" y="1" width="14" height="12" rx="2" fill="none" stroke="#4a4a4f" strokeWidth="2" /><path d="M8 1v12M3 4h3M3 6.500h3M3 9h3" stroke="#4a4a4f" /></svg>
          <NavGap />
          <svg width="14" height="14" viewBox="0 0 14 14"><circle cx="7" cy="7" r="6" fill="none" stroke="#4a4a4f" strokeWidth="2" /><circle cx="7" cy="5.500" r="2.500" fill="#4a4a4f" /><path d="M3 9.500q4 1.500 8 0L9.500 12.500h-5z" fill="#4a4a4f" /></svg>
          <MenuDivider />
          <svg width="12" height="12" viewBox="0 0 12 12"><path d="M0 1h12M0 6h12M0 11h12" stroke="#4a4a4f" strokeWidth="2" /></svg>
        </NavRight>
      </NavBar>
      <Bookmarks>
        <Bookmark $gap={14} $inner={7}>
          <svg width="16" height="16" viewBox="0 0 16 16"><rect width="16" height="16" rx="2" fill="#0061d5" /><text x="1" y="11" fontSize="8.500" fontWeight="700" fill="#fff" fontFamily="Open Sans, sans-serif" textLength="14">box</text></svg>
          <Fit w={123}>All Files | Powered By ...</Fit>
        </Bookmark>
        <Bookmark $gap={12} $inner={4}>
          <svg width="16" height="16" viewBox="0 0 16 16"><rect width="16" height="16" fill="#e9eadb" /><path d="M6 2h4l1 2H7zM4 4.500h7l1 2H5zM6 7h6v2H6zM3 9.500h9l-1 2H5zM6 12h5l1 2.500H7z" fill="#20418a" /></svg>
          <Fit w={79}>Library Genesis</Fit>
        </Bookmark>
        <Bookmark $gap={12} $inner={4}><OutlookIcon /><Fit w={46}>NUSmail</Fit></Bookmark>
        <Bookmark $gap={10} $inner={5}><GlobeIcon /><Fit w={53}>Education</Fit></Bookmark>
        <Overflow><svg width="14" height="12" viewBox="0 0 14 12"><path d="M1 .8L6 6l-5 5.200M7.500.8L12.500 6l-5 5.200" fill="none" stroke="#4a4a4f" strokeWidth="2" /></svg></Overflow>
      </Bookmarks>
      <PageArea>
        <Article>
          <Para $top={-12}><Line>Command: <Code>list taskincomplet</Code></Line></Para>
          <Heading $top={26} $size={27} $h={34}><Fit w={204}>3.3. Recipe Book</Fit></Heading>
          <Para $top={14}><Line>Need to organise your large collection</Line><Line>section.</Line></Para>
          <Heading $top={22} $size={23.500} $h={30}><Fit w={232}>3.3.1. Adding a recipe:</Fit><Code $big>a</Code></Heading>
          <Para $top={14}><Line>Adds a recipe into the recipe book.</Line><Line>Format: <Code>{"add recipe n/<name> i"}</Code></Line></Para>
          <Note>
            <svg width="38" height="40" viewBox="0 0 38 40"><circle cx="18.500" cy="20.500" r="17.500" fill="#999" opacity=".5" /><circle cx="18" cy="19" r="17.500" fill="#19407c" /><path d="M14.500 6h6v5h-6zM12.500 14h8.500v13h3v4.500H12.500V27h2.500v-8.500h-2.500z" fill="#f2f2f2" /></svg>
            <NoteText>All nutritional value in</NoteText>
          </Note>
          <Para $top={20}><Line>Examples:</Line></Para>
          <Para $top={21} $indent={24}>
            <Line><Bullet /><Code>add recipe n/Chicken Ric</Code></Line>
            <Line>Creates a recipe with name "Chick</Line>
            <Line>and 30g protein.</Line>
          </Para>
          <Heading $top={23} $size={23.500} $h={30}><Fit w={230}>3.3.2. Editing a recipe:</Fit><Code $big>e</Code></Heading>
          <Para $top={13}><Line>Edit a recipe according to a specified</Line><Line>Format: <Code>{"edit recipe <index>  "}</Code></Line></Para>
        </Article>
        <PageScroll>
          <svg width="8" height="6" viewBox="0 0 8 6"><path d="M.5 5L4 1.500 7.500 5" fill="none" stroke="#555" strokeWidth="1.800" /></svg>
          <PageThumb />
          <svg width="8" height="6" viewBox="0 0 8 6"><path d="M.5 1L4 4.500 7.500 1" fill="none" stroke="#555" strokeWidth="1.800" /></svg>
        </PageScroll>
      </PageArea>
    </Browser>
  );
}

const W = 58.6;

function TaskbarRow() {
  return (
    <Taskbar>
      <Slot $w={49}><WindowsLogo /></Slot>
      <Slot $w={9}><Grip /></Slot>
      <Slot $w={8} />
      <Slot $w={54} $open><ExplorerIcon /></Slot>
      <Sliver />
      <Slot $w={W}><IEIcon /></Slot>
      <Slot $w={W}><ChromeIcon /></Slot>
      <Slot $w={W} $open><FirefoxIcon /></Slot>
      <Slot $w={W}><TelegramIcon /></Slot>
      <Slot $w={W} $open><IJIcon /></Slot>
      <Slot $w={W}><StudioIcon /></Slot>
      <Slot $w={W}><WeChatIcon /></Slot>
      <Slot $w={W}><VSIcon /></Slot>
      <Slot $w={W}><GithubIcon /></Slot>
      <Slot $w={W}><TouchIcon /></Slot>
      <Slot $w={W}><VimIcon /></Slot>
      <Slot $w={W}><VBoxIcon /></Slot>
      <Slot $w={W}><BirdIcon /></Slot>
      <Slot $w={58} $open $front><ChefIcon s={32} /></Slot>
      <Slot $w={58} $open><PaintIcon /></Slot>
      <Slot $w={58} $open><AngularIcon /></Slot>
      <TrayIcon $left={10}><Grip /></TrayIcon>
      <TrayIcon $left={12}><KeyboardIcon /></TrayIcon>
      <TrayIcon $left={14}><svg width="8" height="5" viewBox="0 0 8 5"><path d="M4 0l4 5H0z" fill="#eee" /></svg></TrayIcon>
      <TrayIcon $left={13}><SpeakerIcon /></TrayIcon>
      <TrayIcon $left={15}><svg width="8" height="15" viewBox="0 0 8 15"><path d="M1 2.500h6v11H1zM3 1h2" fill="none" stroke="#fff" strokeWidth="1.500" /><path d="M2.500 8h3v4h-3z" fill="#fff" /></svg></TrayIcon>
      <TrayIcon $left={10}><svg width="15" height="12" viewBox="0 0 15 12"><path d="M1 12v-2M4 12V9M7 12V6M10 12V3M13 12V0" stroke="#fff" strokeWidth="2" /></svg></TrayIcon>
      <TrayIcon $left={14}><Fit w={10}>A</Fit></TrayIcon>
      <TrayIcon $left={17}><svg width="15" height="15" viewBox="0 0 15 15"><rect width="15" height="15" fill="#fff" /><circle cx="7.500" cy="7.500" r="6" fill="#222" /><path d="M10 3v6q0 2.500-3.500 2" fill="none" stroke="#fff" strokeWidth="1.700" /></svg></TrayIcon>
      <Clock><Fit w={43}>4:54 PM</Fit><Fit w={53}>11/1/2019</Fit></Clock>
    </Taskbar>
  );
}

export default function App() {
  return (
    <>
      <GlobalStyle />
      <Desktop>
        <BrowserWindow />
        <Wallpaper><Wall /></Wallpaper>
        <DukeCooks />
        <TaskbarRow />
      </Desktop>
    </>
  );
}
